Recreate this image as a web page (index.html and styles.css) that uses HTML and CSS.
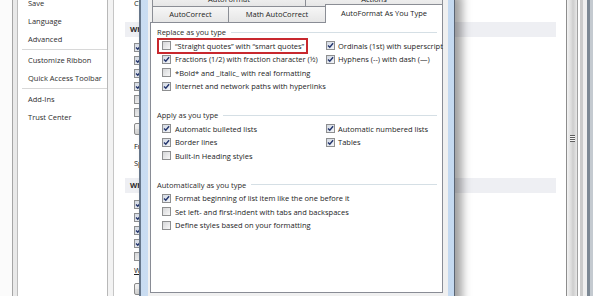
FILE: index.html
```html
<!DOCTYPE html>
<html lang="en">
<head>
    <meta charset="UTF-8">
    <meta name="viewport" content="width=device-width, initial-scale=1.0">
    <title>Word Options - AutoCorrect</title>
    <link rel="stylesheet" href="styles.css">
</head>
<body>
<div class="window">
    <div class="frame-left"></div>

    <!-- Left category list -->
    <ul class="nav">
        <li>Save</li>
        <li>Language</li>
        <li>Advanced</li>
        <li class="sep"></li>
        <li>Customize Ribbon</li>
        <li>Quick Access Toolbar</li>
        <li class="sep"></li>
        <li>Add-Ins</li>
        <li>Trust Center</li>
    </ul>
    <div class="nav-edge"></div>

    <!-- Proofing page (mostly behind the dialog) -->
    <div class="options">
        <div class="opt-intro">Change how Word corrects and formats text as you type: <span class="opt-button">AutoCorrect Options...</span></div>

        <div class="opt-heading">When correcting spelling in Microsoft Office programs</div>
        <div class="opt-list">
            <label class="opt-row"><span class="cb checked"><svg viewBox="0 0 7 7"><path d="M1 3.4 2.8 5.3 6.1 1.2"/></svg></span>Ignore words in UPPERCASE</label>
            <label class="opt-row"><span class="cb checked"><svg viewBox="0 0 7 7"><path d="M1 3.4 2.8 5.3 6.1 1.2"/></svg></span>Ignore words that contain numbers</label>
            <label class="opt-row"><span class="cb checked"><svg viewBox="0 0 7 7"><path d="M1 3.4 2.8 5.3 6.1 1.2"/></svg></span>Ignore Internet and file addresses</label>
            <label class="opt-row"><span class="cb checked"><svg viewBox="0 0 7 7"><path d="M1 3.4 2.8 5.3 6.1 1.2"/></svg></span>Flag repeated words</label>
            <label class="opt-row"><span class="cb"></span>Enforce accented uppercase in French</label>
            <label class="opt-row"><span class="cb"></span>Suggest from main dictionary only</label>
        </div>
        <span class="opt-button dict">Custom Dictionaries...</span>
        <div class="opt-field first">French <u>m</u>odes: <span class="opt-select">Traditional and new spellings</span></div>
        <div class="opt-field">Spanish modes: <span class="opt-select">Tuteo verb forms only</span></div>

        <div class="opt-heading second">When correcting spelling and grammar in Word</div>
        <div class="opt-list lower">
            <label class="opt-row"><span class="cb checked"><svg viewBox="0 0 7 7"><path d="M1 3.4 2.8 5.3 6.1 1.2"/></svg></span>Check spelling as you type</label>
            <label class="opt-row"><span class="cb checked"><svg viewBox="0 0 7 7"><path d="M1 3.4 2.8 5.3 6.1 1.2"/></svg></span>Use contextual spelling</label>
            <label class="opt-row"><span class="cb checked"><svg viewBox="0 0 7 7"><path d="M1 3.4 2.8 5.3 6.1 1.2"/></svg></span>Mark grammar errors as you type</label>
            <label class="opt-row"><span class="cb checked"><svg viewBox="0 0 7 7"><path d="M1 3.4 2.8 5.3 6.1 1.2"/></svg></span>Check grammar with spelling</label>
            <label class="opt-row"><span class="cb"></span>Show readability statistics</label>
        </div>
        <div class="opt-field style"><u>W</u>riting Style: <span class="opt-select">Grammar Only</span></div>
        <span class="opt-button recheck">Recheck Document</span>
    </div>

    <div class="scrollbar"><span class="grip"></span></div>
    <div class="frame-right"></div>

    <!-- AutoCorrect dialog on top -->
    <div class="dialog">
        <div class="client">
            <div class="tab-row top">
                <div class="tab autoformat">AutoFormat</div>
                <div class="tab actions">Actions</div>
            </div>
            <div class="tab-row">
                <div class="tab autocorrect">AutoCorrect</div>
                <div class="tab math">Math AutoCorrect</div>
                <div class="tab active">AutoFormat As You Type</div>
            </div>

            <div class="panel">
                <div class="group">
                    <div class="group-title">Replace as you type</div>
                    <div class="checks">
                        <label class="marked"><span class="cb"></span>“Straight quotes” with “smart quotes”</label>
                        <label class="right"><span class="cb checked"><svg viewBox="0 0 7 7"><path d="M1 3.4 2.8 5.3 6.1 1.2"/></svg></span>Ordinals (1st) with superscript</label>
                        <label><span class="cb checked"><svg viewBox="0 0 7 7"><path d="M1 3.4 2.8 5.3 6.1 1.2"/></svg></span>Fractions (1/2) with fraction character (½)</label>
                        <label class="right"><span class="cb checked"><svg viewBox="0 0 7 7"><path d="M1 3.4 2.8 5.3 6.1 1.2"/></svg></span>Hyphens (--) with dash (—)</label>
                        <label><span class="cb"></span>*Bold* and _italic_ with real formatting</label>
                        <label><span class="cb checked"><svg viewBox="0 0 7 7"><path d="M1 3.4 2.8 5.3 6.1 1.2"/></svg></span>Internet and network paths with hyperlinks</label>
                    </div>
                </div>

                <div class="group">
                    <div class="group-title">Apply as you type</div>
                    <div class="checks">
                        <label><span class="cb checked"><svg viewBox="0 0 7 7"><path d="M1 3.4 2.8 5.3 6.1 1.2"/></svg></span>Automatic bulleted lists</label>
                        <label class="right"><span class="cb checked"><svg viewBox="0 0 7 7"><path d="M1 3.4 2.8 5.3 6.1 1.2"/></svg></span>Automatic numbered lists</label>
                        <label><span class="cb checked"><svg viewBox="0 0 7 7"><path d="M1 3.4 2.8 5.3 6.1 1.2"/></svg></span>Border lines</label>
                        <label class="right"><span class="cb checked"><svg viewBox="0 0 7 7"><path d="M1 3.4 2.8 5.3 6.1 1.2"/></svg></span>Tables</label>
                        <label><span class="cb"></span>Built-in Heading styles</label>
                    </div>
                </div>

                <div class="group">
                    <div class="group-title">Automatically as you type</div>
                    <div class="checks">
                        <label><span class="cb checked"><svg viewBox="0 0 7 7"><path d="M1 3.4 2.8 5.3 6.1 1.2"/></svg></span>Format beginning of list item like the one before it</label>
                        <label><span class="cb"></span>Set left- and first-indent with tabs and backspaces</label>
                        <label><span class="cb"></span>Define styles based on your formatting</label>
                    </div>
                </div>
            </div>
        </div>
    </div>
</div>
</body>
</html>
```

FILE: styles.css
```css
* {
    box-sizing: border-box;
}
body {
    margin: 0;
    font-family: "Open Sans", "Noto Sans", sans-serif;
    font-size: 7.5px;
    color: #222;
    background-color: #fff;
    overflow: hidden;
}
.window {
    position: relative;
    display: flex;
    width: 593px;
    height: 296px;
    overflow: hidden;
}
.frame-left {
    flex: none;
    width: 18px;
    background: linear-gradient(to right, #fbfbfb 12px, #a5a5a5 12px, #a5a5a5 13px, #e9e9e9 13px, #e9e9e9 17px, #bcbcbc 17px);
}

/* Category list */
.nav {
    flex: none;
    list-style: none;
    width: 89px;
    margin: -6px 0 0;
    padding: 0;
    color: #2e2e2e;
}
.nav li {
    height: 18px;
    line-height: 18px;
    padding-left: 10px;
    white-space: nowrap;
}
.nav .sep {
    height: 1px;
    margin: 1px 0 1px 4px;
    padding: 0;
    background-color: #d8d8d8;
}
.nav-edge {
    flex: none;
    width: 8px;
    background: linear-gradient(to right, #b8b8b8 1px, #f3f3f3 1px, #f3f3f3 6px, #c6c6c6 6px, #c6c6c6 7px, #fff 7px);
}

/* Proofing page */
.options {
    flex: 1;
    min-width: 0;
    padding: 0 10px;
    white-space: nowrap;
}
.opt-intro {
    height: 13px;
    line-height: 13px;
    margin-top: -3px;
    padding-left: 9px;
}
.opt-heading {
    height: 15px;
    line-height: 15px;
    margin-top: 12px;
    padding-left: 5px;
    font-weight: bold;
    color: #2a2a2a;
    background-color: #eeeff3;
}
.opt-heading.second {
    margin-top: 8px;
}
.opt-list {
    margin-top: 4px;
    padding-left: 9px;
}
.opt-list.lower {
    margin-top: 5px;
}
.opt-row {
    display: flex;
    align-items: center;
    gap: 4px;
    height: 13px;
}
.opt-button {
    display: inline-block;
    height: 12px;
    line-height: 10px;
    padding: 0 8px;
    border: 1px solid #8a8a8a;
    border-radius: 2px;
    background: linear-gradient(#f4f4f4, #ebebeb 50%, #dedede 50%, #d2d2d2);
}
.opt-button.dict {
    margin: 4px 0 0 9px;
}
.opt-button.recheck {
    margin: 6px 0 0 9px;
}
.opt-field {
    height: 13px;
    line-height: 13px;
    margin-top: 4px;
    padding-left: 9px;
}
.opt-field.first {
    margin-top: 5px;
}
.opt-field.style {
    margin-top: 1px;
}
.opt-select {
    display: inline-block;
    margin-left: 20px;
    padding: 0 30px 0 3px;
    border: 1px solid #a8a8a8;
    line-height: 10px;
}

/* Checkboxes */
.cb {
    flex: none;
    display: flex;
    align-items: center;
    justify-content: center;
    width: 9px;
    height: 9px;
    border: 1px solid #8e8f90;
    background: linear-gradient(135deg, #d5d6d8, #f8f8f8);
}
.cb.checked {
    background: linear-gradient(135deg, #d3d9e3, #f3f5f8);
}
.cb svg {
    width: 7px;
    height: 7px;
    fill: none;
    stroke: #24366e;
    stroke-width: 1.4;
}

.scrollbar {
    flex: none;
    display: flex;
    flex-direction: column;
    justify-content: center;
    align-items: center;
    width: 12px;
    padding-bottom: 20px;
    border-left: 1px solid #8d8d8d;
    border-right: 1px solid #a0a0a0;
    background: linear-gradient(to right, #f3f3f3, #dadada 45%, #cdcdcd 60%, #e8e8e8);
}
.grip {
    width: 5px;
    height: 7px;
    background: repeating-linear-gradient(#5e5e5e 0 1px, #f4f4f4 1px 2px);
}
.frame-right {
    flex: none;
    width: 15px;
    background: linear-gradient(to right, #fdfdfd 2px, #cbcbcb 2px, #cbcbcb 5px, #efefef 5px, #efefef 9px, #7c8894 9px, #7c8894 12px, #c4cad0 12px);
}

/* AutoCorrect dialog */
.dialog {
    position: absolute;
    left: 139px;
    top: -8px;
    width: 316px;
    height: 312px;
    padding: 0 6px 0 7px;
    border-left: 2px solid #66768a;
    border-right: 1px solid #5a6574;
    background: linear-gradient(to right, #c9dcf1, #dce8f6 50%, #c4d9f0);
    box-shadow: 7px 2px 9px rgba(0, 0, 0, 0.38);
    color: #1c1c1c;
}
.client {
    height: 100%;
    padding: 0 5px 0 2px;
    background-color: #f0f0f0;
}
.tab-row {
    display: flex;
    align-items: flex-end;
    height: 16px;
    padding-left: 2px;
}
.tab-row.top {
    height: 14px;
}
.tab {
    height: 100%;
    border: 1px solid #8b8e95;
    border-bottom: none;
    background: linear-gradient(#f6f6f6, #e6e6e6);
    text-align: center;
    line-height: 14px;
    white-space: nowrap;
}
.tab + .tab {
    margin-left: -1px;
}
.tab-row.top .tab {
    line-height: 13px;
}
.autoformat {
    width: 154px;
}
.actions {
    width: 138px;
}
.autocorrect {
    width: 77px;
}
.math {
    width: 98px;
}
.tab.active {
    position: relative;
    z-index: 1;
    width: 118px;
    height: 19px;
    margin-top: -2px;
    margin-bottom: -1px;
    line-height: 17px;
    background: #fff;
}
.panel {
    height: 271px;
    padding: 3px 5px 0 0;
    border: 1px solid #898c95;
    background-color: #fff;
}
.group + .group {
    margin-top: 16px;
}
.group-title {
    display: flex;
    align-items: center;
    gap: 5px;
    height: 12px;
    padding-left: 6px;
    color: #2b2b2b;
    white-space: nowrap;
}
.group-title::after {
    content: "";
    flex: 1;
    height: 1px;
    background-color: #d5dfe5;
}
.checks {
    display: grid;
    grid-template-columns: 164px 1fr;
    grid-auto-rows: 13.5px;
    margin-top: 1px;
    padding-left: 11px;
}
.checks label {
    grid-column: 1;
    display: flex;
    align-items: center;
    gap: 4px;
    white-space: nowrap;
}
.checks .right {
    grid-column: 2;
    gap: 3px;
}
/* red annotation box round the first option */
.checks .marked {
    justify-self: start;
    margin: 1px 0 1px -3px;
    padding: 0 2px 0 3px;
    box-shadow: 0 0 0 2px #c8282e;
}
```
